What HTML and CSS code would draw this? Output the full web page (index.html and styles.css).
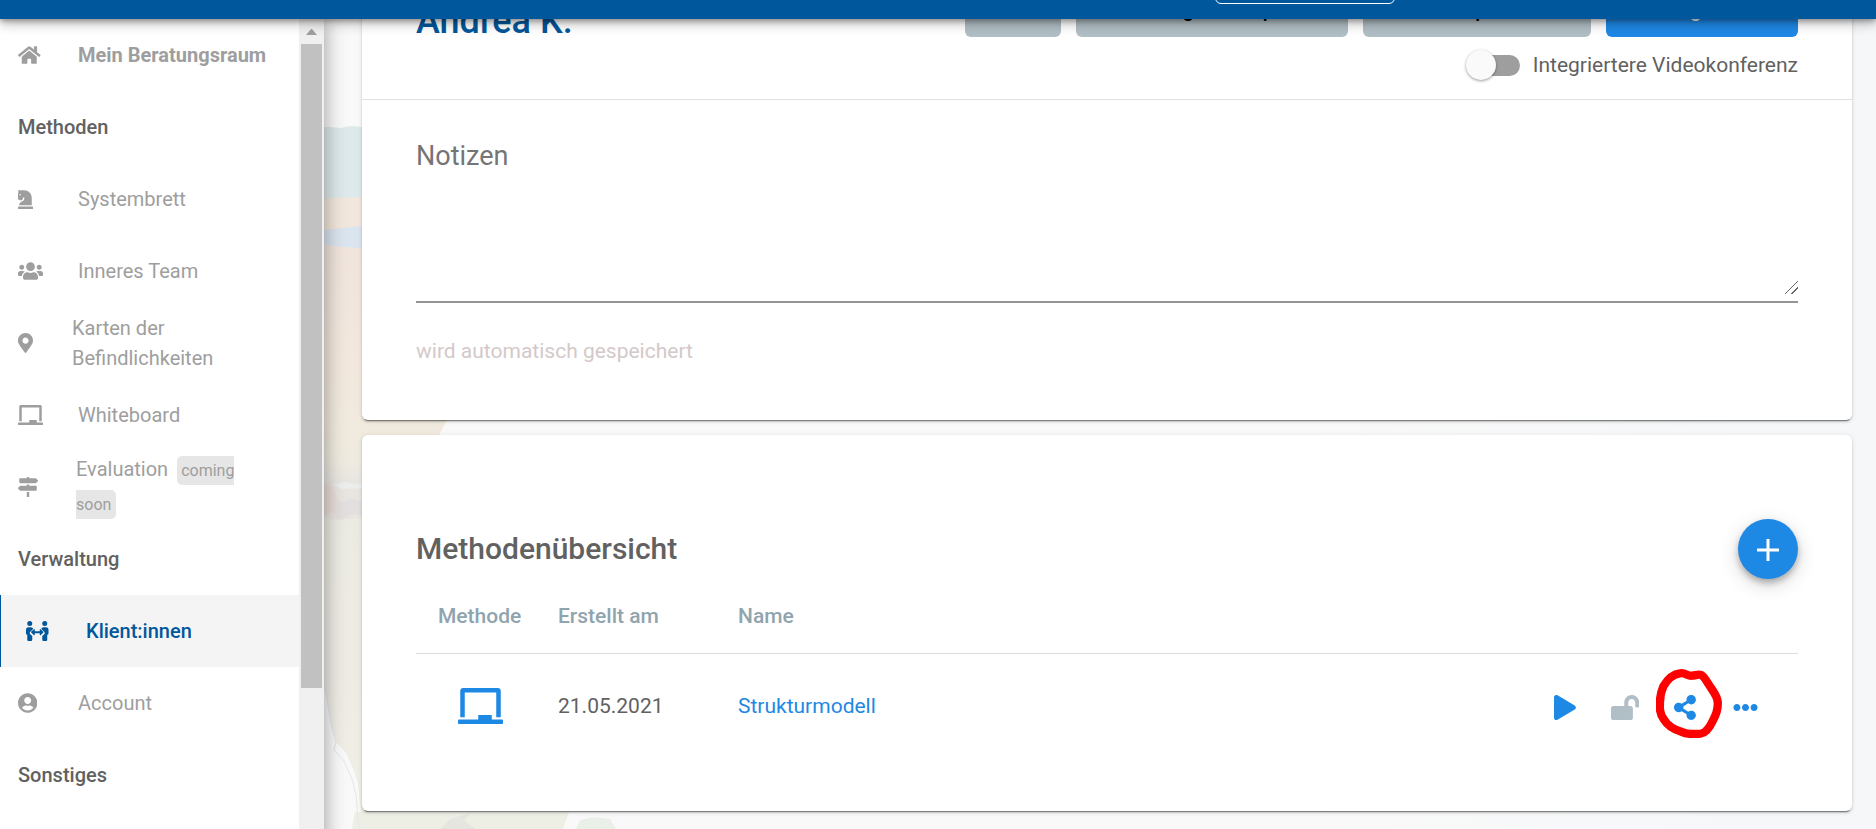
FILE: index.html
```html
<!DOCTYPE html>
<html lang="de">
<head>
    <meta charset="UTF-8">
    <title>Klient:innen – Andrea K.</title>
    <link rel="stylesheet" href="styles.css">
</head>
<body>
    <!-- Hintergrundbild -->
    <svg class="backdrop" width="640" height="829" viewBox="0 0 640 829" aria-hidden="true">
        <defs>
            <linearGradient id="sand" x1="0" y1="0" x2="0" y2="1">
                <stop offset="0" stop-color="#f0e4dd"/>
                <stop offset="0.5" stop-color="#f2e8dd"/>
                <stop offset="0.9" stop-color="#f0ebdf"/>
                <stop offset="1" stop-color="#e8e5e2"/>
            </linearGradient>
            <linearGradient id="land" x1="0" y1="0" x2="0" y2="1">
                <stop offset="0" stop-color="#ecebe3"/>
                <stop offset="0.5" stop-color="#eeebe5"/>
                <stop offset="1" stop-color="#f0f0e4"/>
            </linearGradient>
        </defs>
        <path fill="#dee9eb" d="M300 128l30-1 10 1 12-2 10 1 40 1v72H300z"/>
        <path fill="#f2e7dc" d="M300 199l62-2v52h-62z"/>
        <path fill="url(#sand)" d="M300 245h150c10 60 10 120 0 165l-3 10-8 15-10 48H300z"/>
        <path fill="#dbe5ef" d="M300 231l24-1 38-4v22l-18-1-20-2-24-1z"/>
        <path fill="#e8e5e0" d="M300 482h70v40H300z"/>
        <path fill="#eceeed" d="M332 484l14-2 8 2 8-1v5l-20 1z"/>
        <path fill="#e9ddd7" d="M324 484l8 2 6 14-2 16-4-4-8 4z"/>
        <path fill="#e2dfde" d="M338 500l6 2 6-4 12 4v14l-8-2-10 4-4 8-4-8z"/>
        <path fill="url(#land)" d="M300 522l24-4 12 2 26-2h8v300l-8 9-4-44-4-12-8-18-10-11-4-14-8-46h-24z"/>
        <path fill="#eeefe4" d="M355 812h214l-6 17H352z"/>
        <path fill="#e6e6e0" d="M440 829l10-10 20-6-6 8 12 8z"/>
        <path fill="#eaefe8" d="M576 829l4-9 14-3 16 2 6 10z"/>
        <path fill="none" stroke="#e2e7eb" d="M324 683l8 45 4 14-2 8 10 11 8 18 4 16 3 34"/>
    </svg>

    <header class="topbar">
        <button class="topbar-btn" type="button" aria-label="Menü"></button>
    </header>

    <div class="layout">
        <aside class="sidebar">
            <nav class="menu">
                <a class="item strong" href="#">
                    <span class="ico"><svg height="20" viewBox="0 0 576 512"><path d="M280.37 148.26L96 300.11V464a16 16 0 0 0 16 16l112.06-.29a16 16 0 0 0 15.92-16V368a16 16 0 0 1 16-16h64a16 16 0 0 1 16 16v95.64a16 16 0 0 0 16 16.05L464 480a16 16 0 0 0 16-16V300L295.67 148.26a12.19 12.19 0 0 0-15.3 0zM571.6 251.47L488 182.56V44.05a12 12 0 0 0-12-12h-56a12 12 0 0 0-12 12v72.61L318.47 43a48 48 0 0 0-61 0L4.34 251.47a12 12 0 0 0-1.6 16.9l25.5 31A12 12 0 0 0 45.15 301l235.22-193.74a12.19 12.19 0 0 1 15.3 0L530.9 301a12 12 0 0 0 16.9-1.6l25.5-31a12 12 0 0 0-1.7-16.93z"/></svg></span>
                    <span>Mein Beratungsraum</span>
                </a>
                <h3 class="group">Methoden</h3>
                <a class="item" href="#">
                    <span class="ico"><svg height="20" viewBox="0 0 384 512"><path d="M19 272.47l40.63 18.06a32 32 0 0 0 24.88.47l12.78-5.12a32 32 0 0 0 18.76-20.5l9.22-30.65a24 24 0 0 1 12.55-15.65L159.94 208v50.33a48 48 0 0 1-26.53 42.94l-57.22 28.65A80 80 0 0 0 32 401.48V416h319.86V224c0-106-85.92-192-191.92-192H12A12 12 0 0 0 0 44a16.9 16.9 0 0 0 1.79 7.58L16 80l-9 9a24 24 0 0 0-7 17v137.21a32 32 0 0 0 19 29.26zM52 128a20 20 0 1 1-20 20 20 20 0 0 1 20-20zm316 320H16a16 16 0 0 0-16 16v32a16 16 0 0 0 16 16h352a16 16 0 0 0 16-16v-32a16 16 0 0 0-16-16z"/></svg></span>
                    <span>Systembrett</span>
                </a>
                <a class="item" href="#">
                    <span class="ico"><svg height="20" viewBox="0 0 640 512"><path d="M96 224c35.3 0 64-28.7 64-64s-28.7-64-64-64-64 28.7-64 64 28.7 64 64 64zm448 0c35.3 0 64-28.7 64-64s-28.7-64-64-64-64 28.7-64 64 28.7 64 64 64zm32 32h-64c-17.6 0-33.5 7.1-45.1 18.6 40.3 22.1 68.9 62 75.1 109.4h66c17.7 0 32-14.3 32-32v-32c0-35.3-28.7-64-64-64zm-256 0c61.9 0 112-50.1 112-112S381.9 32 320 32 208 82.1 208 144s50.1 112 112 112zm76.8 32h-8.3c-20.8 10-43.9 16-68.5 16s-47.6-6-68.5-16h-8.3C179.6 288 128 339.6 128 403.2V432c0 26.5 21.5 48 48 48h288c26.5 0 48-21.5 48-48v-28.8c0-63.6-51.6-115.2-115.2-115.2zm-223.7-13.4C161.5 263.1 145.6 256 128 256H64c-35.3 0-64 28.7-64 64v32c0 17.7 14.3 32 32 32h65.9c6.3-47.4 34.9-87.3 75.2-109.4z"/></svg></span>
                    <span>Inneres Team</span>
                </a>
                <a class="item narrow" href="#">
                    <span class="ico"><svg height="20" viewBox="0 0 384 512"><path d="M172.268 501.67C26.97 291.031 0 269.413 0 192 0 85.961 85.961 0 192 0s192 85.961 192 192c0 77.413-26.97 99.031-172.268 309.67-9.535 13.774-29.93 13.773-39.464 0zM192 272c44.183 0 80-35.817 80-80s-35.817-80-80-80-80 35.817-80 80 35.817 80 80 80z"/></svg></span>
                    <span>Karten der Befindlichkeiten</span>
                </a>
                <a class="item" href="#">
                    <span class="ico"><svg height="20" viewBox="0 0 640 512"><path d="M96 64h448v352h64V40c0-22.06-17.94-40-40-40H72C49.94 0 32 17.94 32 40v376h64V64zm528 384H480v-64H288v64H16c-8.84 0-16 7.16-16 16v32c0 8.84 7.16 16 16 16h608c8.84 0 16-7.16 16-16v-32c0-8.84-7.16-16-16-16z"/></svg></span>
                    <span>Whiteboard</span>
                </a>
                <a class="item soon" href="#">
                    <span class="ico"><svg height="20" viewBox="0 0 512 512"><path d="M507.31 84.69L464 41.37c-6-6-14.14-9.37-22.63-9.37H288V16c0-8.84-7.16-16-16-16h-32c-8.84 0-16 7.16-16 16v16H56c-13.25 0-24 10.75-24 24v80c0 13.25 10.75 24 24 24h385.37c8.49 0 16.62-3.37 22.63-9.37l43.31-43.31c6.25-6.26 6.25-16.38 0-22.63zM224 496c0 8.84 7.16 16 16 16h32c8.84 0 16-7.16 16-16V384h-64v112zm232-272H288v-32h-64v32H70.63c-8.49 0-16.62 3.37-22.63 9.37L4.69 276.69c-6.25 6.25-6.25 16.38 0 22.63L48 342.63c6 6 14.14 9.37 22.63 9.37H456c13.25 0 24-10.75 24-24v-80c0-13.25-10.75-24-24-24z"/></svg></span>
                    <span>Evaluation <span class="badge">coming soon</span></span>
                </a>
                <h3 class="group">Verwaltung</h3>
                <a class="item active" href="#">
                    <span class="ico"><svg height="20" viewBox="0 0 576 512"><path d="M96,128A64,64,0,1,0,32,64,64,64,0,0,0,96,128Zm0,176.08a44.11,44.11,0,0,1,13.64-32L181.77,204c1.65-1.55,3.77-2.31,5.61-3.57A63.91,63.91,0,0,0,128,160H64A64,64,0,0,0,0,224v96a32,32,0,0,0,32,32V480a32,32,0,0,0,32,32h64a32,32,0,0,0,32-32V383.61l-50.36-47.53A44.08,44.08,0,0,1,96,304.08ZM480,128a64,64,0,1,0-64-64A64,64,0,0,0,480,128Zm32,32H448a63.91,63.91,0,0,0-59.38,40.42c1.84,1.27,4,2,5.62,3.59l72.12,68.06a44.37,44.37,0,0,1,0,64L416,383.62V480a32,32,0,0,0,32,32h64a32,32,0,0,0,32-32V352a32,32,0,0,0,32-32V224A64,64,0,0,0,512,160ZM444.4,295.34a12,12,0,0,0,0-17.48L372.28,209.8A12.08,12.08,0,0,0,352,218.54V264H224V218.51a12.08,12.08,0,0,0-20.33-8.74l-72.12,68.08a12,12,0,0,0,0,17.46l72.11,68.06A12.07,12.07,0,0,0,224,354.66V312H352v42.6a12.08,12.08,0,0,0,20.27,8.75Z"/></svg></span>
                    <span>Klient:innen</span>
                </a>
                <a class="item" href="#">
                    <span class="ico"><svg height="20" viewBox="0 0 496 512"><path d="M248 8C111 8 0 119 0 256s111 248 248 248 248-111 248-248S385 8 248 8zm0 96c48.6 0 88 39.4 88 88s-39.4 88-88 88-88-39.4-88-88 39.4-88 88-88zm0 344c-58.7 0-111.3-26.6-146.5-68.2 18.8-35.4 55.6-59.8 98.5-59.8 2.4 0 4.8.4 7.1 1.1 13 4.2 26.6 6.9 40.9 6.9 14.3 0 28-2.7 40.9-6.9 2.3-.7 4.7-1.1 7.1-1.1 42.9 0 79.7 24.4 98.5 59.8C359.3 421.4 306.7 448 248 448z"/></svg></span>
                    <span>Account</span>
                </a>
                <h3 class="group">Sonstiges</h3>
            </nav>
            <div class="scrollbar">
                <svg class="scroll-up" width="11" height="6" viewBox="0 0 11 6"><path d="M5 0h1l5 6H0z"/></svg>
                <div class="scroll-thumb"></div>
            </div>
        </aside>

        <main class="content">
            <section class="card">
                <div class="client-head">
                    <div class="client-row">
                        <h1>Andrea K.</h1>
                        <div class="actions">
                            <button class="btn btn-chat" type="button">Chat</button>
                            <button class="btn btn-link" type="button">Einladungslink kopieren</button>
                            <button class="btn btn-export" type="button">Daten exportieren</button>
                            <button class="btn btn-start" type="button">Sitzung starten</button>
                        </div>
                    </div>
                    <label class="switch">
                        <input type="checkbox">
                        <span>Integriertere Videokonferenz</span>
                    </label>
                </div>
                <div class="notes">
                    <div class="field">
                        <textarea placeholder="Notizen" aria-label="Notizen"></textarea>
                    </div>
                    <p class="hint">wird automatisch gespeichert</p>
                </div>
            </section>

            <section class="card methods">
                <div class="methods-head">
                    <h2>Methodenübersicht</h2>
                    <button class="fab" type="button" aria-label="Methode hinzufügen">
                        <svg width="24" height="24" viewBox="0 0 24 24"><path d="M1 13h22M12 2v22" fill="none" stroke="#fff" stroke-width="3"/></svg>
                    </button>
                </div>
                <table>
                    <thead>
                        <tr>
                            <th class="col-method">Methode</th>
                            <th class="col-date">Erstellt am</th>
                            <th>Name</th>
                            <th class="col-tools"></th>
                        </tr>
                    </thead>
                    <tbody>
                        <tr>
                            <td class="col-method"><svg height="36" viewBox="0 0 640 512"><path d="M96 64h448v352h64V40c0-22.06-17.94-40-40-40H72C49.94 0 32 17.94 32 40v376h64V64zm528 384H480v-64H288v64H16c-8.84 0-16 7.16-16 16v32c0 8.84 7.16 16 16 16h608c8.84 0 16-7.16 16-16v-32c0-8.84-7.16-16-16-16z"/></svg></td>
                            <td>21.05.2021</td>
                            <td><a href="#">Strukturmodell</a></td>
                            <td class="col-tools">
                                <div class="tools">
                                    <button type="button" aria-label="Starten"><svg height="25" viewBox="0 0 448 512"><path d="M424.4 214.7L72.4 6.6C43.8-10.3 0 6.1 0 47.9V464c0 37.5 40.7 60.1 72.4 41.3l352-208c31.4-18.5 31.5-64.1 0-82.6z"/></svg></button>
                                    <button class="off" type="button" aria-label="Sperren"><svg height="25" viewBox="0 0 576 512"><path d="M423.5 0C339.5.3 272 69.5 272 153.5V224H48c-26.5 0-48 21.5-48 48v192c0 26.5 21.5 48 48 48h352c26.5 0 48-21.5 48-48V272c0-26.5-21.5-48-48-48h-48v-71.1c0-39.6 31.7-72.5 71.3-72.9 40-.4 72.7 32.1 72.7 72v80c0 13.3 10.7 24 24 24h32c13.3 0 24-10.7 24-24v-80C576 68 507.5-.3 423.5 0z"/></svg></button>
                                    <button class="share" type="button" aria-label="Teilen">
                                        <svg height="25" viewBox="0 0 448 512"><path d="M352 320c-22.608 0-43.387 7.819-59.79 20.895l-102.486-64.054a96.551 96.551 0 0 0 0-41.683l102.486-64.054C308.613 184.181 329.392 192 352 192c53.019 0 96-42.981 96-96S405.019 0 352 0s-96 42.981-96 96c0 7.158.79 14.13 2.276 20.841L155.79 180.895C139.387 167.819 118.608 160 96 160c-53.019 0-96 42.981-96 96s42.981 96 96 96c22.608 0 43.387-7.819 59.79-20.895l102.486 64.054A96.301 96.301 0 0 0 256 416c0 53.019 42.981 96 96 96s96-42.981 96-96-42.981-96-96-96z"/></svg>
                                        <svg class="marker" width="66" height="69" viewBox="0 0 198 207"><path d="M72 13C88 10 94 22 108 20C118 20 126 14 136 18C146 24 152 38 162 52C172 68 184 82 185 98C187 120 182 134 172 152C162 174 150 192 134 194C114 196 92 196 76 188C54 182 36 172 24 152C10 134 11 116 12 98C12 82 16 66 22 52C34 32 50 15 72 13z"/></svg>
                                    </button>
                                    <button type="button" aria-label="Mehr"><svg height="25" viewBox="0 0 512 512"><path d="M328 256c0 39.8-32.2 72-72 72s-72-32.2-72-72 32.2-72 72-72 72 32.2 72 72zm104-72c-39.8 0-72 32.2-72 72s32.2 72 72 72 72-32.2 72-72-32.2-72-72-72zm-352 0c-39.8 0-72 32.2-72 72s32.2 72 72 72 72-32.2 72-72-32.2-72-72-72z"/></svg></button>
                                </div>
                            </td>
                        </tr>
                    </tbody>
                </table>
            </section>
        </main>
    </div>
</body>
</html>
```

FILE: styles.css
```css
* {
    box-sizing: border-box;
}
body {
    margin: 0;
    height: 100vh;
    overflow: hidden;
    background: linear-gradient(90deg, #f9f9f9 70%, #f5f7f9);
    color: #616161;
    font-family: Roboto, sans-serif;
    font-size: 21px;
}
h1, h2, h3, p {
    margin: 0;
    font-weight: 500;
}
a {
    color: #1e88e5;
    text-decoration: none;
}
button {
    border: none;
    padding: 0;
    font-family: inherit;
    cursor: pointer;
}
svg {
    display: block;
    fill: currentColor;
}
.backdrop {
    position: absolute;
    left: 0;
    top: 0;
}

/* Kopfleiste */
.topbar {
    position: relative;
    z-index: 3;
    display: flex;
    justify-content: flex-end;
    align-items: flex-end;
    height: 19px;
    padding: 0 481px 15px 0;
    background: #01579b;
    box-shadow: 0 2px 5px rgba(0, 0, 0, 0.3), 0 5px 12px rgba(0, 0, 0, 0.25);
}
.topbar-btn {
    flex-shrink: 0;
    width: 180px;
    height: 45px;
    background: none;
    border: 1px solid #fff;
    border-radius: 6px;
}
.layout {
    display: flex;
    height: calc(100vh - 19px);
}

/* Seitenmenü */
.sidebar {
    position: relative;
    z-index: 2;
    display: flex;
    flex: 0 0 324px;
    overflow: hidden;
    background: #fff;
}
.layout::before {
    content: "";
    position: absolute;
    width: 324px;
    height: 100%;
    box-shadow: 0 0 20px rgba(0, 0, 0, 0.4);
}
.menu {
    flex: 1;
}
.item,
.group {
    display: flex;
    align-items: center;
    height: 72px;
    padding-left: 18px;
    font-size: 20px;
    line-height: 30px;
}
.item {
    padding-right: 60px;
    color: #9e9e9e;
}
.ico {
    flex: 0 0 60px;
}
.strong {
    padding-right: 0;
    font-weight: 700;
}
.narrow .ico {
    flex-basis: 54px;
}
.soon .ico {
    flex-basis: 58px;
}
.soon {
    line-height: 32px;
}
.active {
    padding-left: 25px;
    border-left: 1px solid #01579b;
    background: #f4f4f4;
    color: #01579b;
    font-weight: 500;
}
.badge {
    margin-left: 4px;
    padding: 5px 5px 5px 4px;
    border-radius: 5px;
    background: #e6e6e6;
    font-size: 16px;
}
.scrollbar {
    width: 25px;
    padding: 10px 2px 0;
    background: #f0f0f0;
}
.scroll-up {
    margin: 0 auto 9px;
    color: #a0a0a0;
}
.scroll-thumb {
    height: 644px;
    background: #c1c1c1;
}

/* Inhalt */
.content {
    position: relative;
    flex: 1;
    margin-top: -59px;
    padding: 0 24px 0 38px;
}
.card {
    margin-bottom: 15px;
    border-radius: 6px;
    background: #fff;
    box-shadow: 0 3px 1px -2px rgba(0, 0, 0, 0.4), 0 2px 2px rgba(0, 0, 0, 0.14), 0 1px 5px rgba(0, 0, 0, 0.12);
}
.client-head {
    padding: 23px 54px 19px;
    border-bottom: 1px solid #e0e0e0;
}
.client-row {
    display: flex;
    justify-content: space-between;
    align-items: flex-end;
}
h1 {
    color: #01579b;
    font-size: 36px;
    line-height: 32px;
}
.actions {
    display: flex;
    gap: 15px;
}
.btn {
    height: 54px;
    border-radius: 6px;
    background: #b0bec5;
    color: #000;
    font-size: 20px;
    font-weight: 500;
}
.btn-chat {
    width: 96px;
}
.btn-link {
    width: 272px;
}
.btn-export {
    width: 228px;
}
.btn-start {
    width: 192px;
    background: #1e88e5;
    color: #fff;
}
.switch {
    display: flex;
    justify-content: flex-end;
    align-items: center;
    gap: 13px;
    height: 30px;
    margin-top: 13px;
}
.switch input {
    appearance: none;
    position: relative;
    width: 44px;
    height: 21px;
    margin: 0;
    border-radius: 11px;
    background: #9e9e9e;
}
.switch input::before {
    content: "";
    position: absolute;
    left: -10px;
    top: -5px;
    width: 30px;
    height: 30px;
    border-radius: 50%;
    background: #fafafa;
    box-shadow: 0 1px 3px rgba(0, 0, 0, 0.4);
}
.notes {
    padding: 34px 54px 57px;
}
.field {
    padding-bottom: 7px;
    border-bottom: 2px solid #949494;
}
textarea {
    display: block;
    width: 100%;
    height: 160px;
    padding: 4px 0;
    border: none;
    background: none;
    font-family: inherit;
    font-size: 27px;
    line-height: 36px;
    resize: vertical;
}
textarea::placeholder {
    color: #757575;
}
textarea::-webkit-resizer {
    background: linear-gradient(135deg, transparent 47%, #666 47%, #666 52%, transparent 52%, transparent 72%, #666 72%, #666 77%, transparent 77%) no-repeat right bottom / 13px 13px;
}
.hint {
    margin-top: 36px;
    color: #d3c9c9;
    font-weight: 400;
    line-height: 24px;
}

/* Methodenübersicht */
.methods {
    padding: 84px 54px 53px;
}
.methods-head {
    display: flex;
    justify-content: space-between;
    align-items: center;
}
h2 {
    padding-bottom: 2px;
    font-size: 30px;
}
.fab {
    display: flex;
    justify-content: center;
    align-items: center;
    width: 60px;
    height: 60px;
    border-radius: 50%;
    background: #1e88e5;
    box-shadow: 0 4px 6px rgba(0, 0, 0, 0.25), 0 6px 20px rgba(0, 0, 0, 0.16);
}
table {
    width: 100%;
    border-collapse: collapse;
    table-layout: fixed;
}
th {
    height: 74px;
    padding: 0;
    border-bottom: 1px solid #dcdcdc;
    color: #90a4ae;
    font-weight: 500;
    text-align: left;
}
td {
    height: 105px;
    padding: 0;
}
.col-method {
    width: 142px;
    padding: 0 36px 0 22px;
}
td.col-method {
    color: #1e88e5;
}
td.col-method svg {
    margin: 0 auto;
}
.col-date {
    width: 180px;
}
.col-tools {
    width: 263px;
}
.tools {
    display: flex;
    padding-top: 3px;
}
.tools button {
    display: flex;
    justify-content: center;
    align-items: center;
    width: 60px;
    height: 60px;
    background: none;
    color: #1e88e5;
}
.tools .off {
    color: #b0bec5;
}
.tools .share {
    position: relative;
}
.marker {
    position: absolute;
    left: 1px;
    top: -8px;
    fill: none;
    stroke: #f00;
    stroke-width: 25;
}
```
